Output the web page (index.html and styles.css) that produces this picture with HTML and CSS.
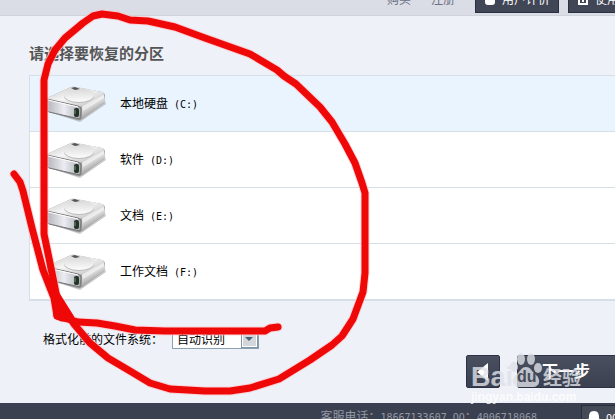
FILE: index.html
```html
<!DOCTYPE html>
<html lang="zh-CN">
<head>
<meta charset="utf-8">
<title>请选择要恢复的分区</title>
<link rel="stylesheet" href="styles.css">
</head>
<body>
<svg class="defs" width="0" height="0" aria-hidden="true">
  <defs>
    <linearGradient id="top" x1="0" y1="0" x2="1" y2="1"><stop offset="0" stop-color="#c4c4c4"/><stop offset=".45" stop-color="#f5f5f5"/><stop offset="1" stop-color="#bdbdbd"/></linearGradient>
    <linearGradient id="dome" x1="0" y1="0" x2="0" y2="1"><stop offset="0" stop-color="#d8d8d8"/><stop offset="1" stop-color="#fcfcfc"/></linearGradient>
    <linearGradient id="front" x1="0" y1="0" x2="1" y2="0"><stop offset="0" stop-color="#b4b5bc"/><stop offset=".5" stop-color="#ececf3"/><stop offset="1" stop-color="#aaabb2"/></linearGradient>
    <linearGradient id="side" x1="0" y1="0" x2=".5" y2="1"><stop offset="0" stop-color="#a8a8a8"/><stop offset=".45" stop-color="#ededed"/><stop offset="1" stop-color="#777"/></linearGradient>
    <symbol id="drive" viewBox="0 0 64 38">
      <path d="M5 27 36 37 62 19 60 14 36 31Z" fill="#a4a7ab" opacity=".6"/>
      <path d="M3 13 25 3Q28 1 32 2L58 7Q61 8 61 11L60 18 38 34Q36 36 33 35L5 27Q3 26 3 24Z" fill="#999"/>
      <path d="M3 13 25 3Q28 1 32 2L58 7Q61 8 59 10L38 21Q36 22 33 21L5 15Z" fill="url(#top)"/>
      <path d="M38 21 60 9 61 17 38 34Z" fill="url(#side)"/>
      <path d="M39 25 60 12" stroke="#fff" stroke-width="1" opacity=".7"/>
      <ellipse cx="35" cy="11" rx="15" ry="7" fill="#bbb"/>
      <ellipse cx="35" cy="10" rx="15" ry="7" fill="url(#dome)"/>
      <path d="M27 3 31 2 36 4 31 5Z" fill="#555"/>
      <path d="M3 14 34 21Q37 22 37 25L36 34 5 27Q3 26 3 24Z" fill="url(#front)" stroke="#777" stroke-width="1"/>
      <path d="M4 15 34 22" stroke="#fff" stroke-width="1"/>
      <rect x="30" y="23" width="5" height="9" rx="2" fill="#253326"/>
      <path d="M31 25v4" stroke="#67a565" stroke-width="1"/>
    </symbol>
  </defs>
</svg>

<header class="topbar">
  <a class="toplink" href="#">购买</a>
  <a class="toplink" href="#">注册</a>
  <button class="tab"><svg width="12" height="16" viewBox="0 0 12 16" aria-hidden="true"><rect x="1" y="2" width="10" height="12" rx="3" fill="#fff"/></svg>用户评价</button>
  <button class="tab"><svg width="12" height="16" viewBox="0 0 12 16" aria-hidden="true"><path d="M2 2h8v11H2z" fill="none" stroke="#fff" stroke-width="2"/><path d="M6 4v4M6 9v2" stroke="#fff" stroke-width="2"/></svg>使用教程</button>
</header>

<main>
  <h1>请选择要恢复的分区</h1>
  <ul class="drives">
    <li class="selected"><svg class="icon" aria-hidden="true"><use href="#drive"/></svg><span>本地硬盘<span class="latin"> (C:)</span></span></li>
    <li><svg class="icon" aria-hidden="true"><use href="#drive"/></svg><span>软件<span class="latin"> (D:)</span></span></li>
    <li><svg class="icon" aria-hidden="true"><use href="#drive"/></svg><span>文档<span class="latin"> (E:)</span></span></li>
    <li><svg class="icon" aria-hidden="true"><use href="#drive"/></svg><span>工作文档<span class="latin"> (F:)</span></span></li>
  </ul>
  <div class="filesystem">
    <label for="fs">格式化前的文件系统：</label>
    <div class="picker">
      <select id="fs"><option>自动识别</option></select>
      <svg class="arrow" width="17" height="18" viewBox="0 0 17 18" aria-hidden="true"><path d="M0 0h17v18H0z" fill="#8394a5"/><path d="M1 1h15v16H1z" fill="#fff"/><path d="M2 2h13v14H2z" fill="#d3d6da"/><path d="M4 7h8L8 11Z" fill="#466078"/></svg>
    </div>
  </div>
  <div class="actions">
    <button class="nav back" aria-label="上一步"><svg width="12" height="20" viewBox="0 0 12 20" aria-hidden="true"><path d="M11 1v18L0 10Z" fill="#fff"/></svg></button>
    <button class="nav next">下一步</button>
  </div>
</main>

<footer>
  <span>客服电话：<span class="latin">18667133607 QQ</span>：<span class="latin">4006718068</span></span>
  <button class="contact"><svg width="12" height="16" viewBox="0 0 12 16" aria-hidden="true"><path d="M6 0C2 0 1 3 1 6L0 12h12L11 6C11 3 10 0 6 0Z" fill="#fff"/></svg><span class="latin">QQ</span>客服</button>
</footer>

<div class="watermark">
  <div class="brand">
    <span class="bai">Bai</span>
    <span class="paw"><svg width="34" height="36" viewBox="0 0 34 36" aria-hidden="true"><ellipse cx="5" cy="14" rx="4" ry="5"/><ellipse cx="12" cy="6" rx="4" ry="6"/><ellipse cx="22" cy="6" rx="4" ry="6"/><ellipse cx="29" cy="15" rx="4" ry="5"/><path d="M17 14c-5 0-6 5-10 8-6 5-3 13 4 12h12c7 1 10-7 4-12-4-3-5-8-10-8Z"/></svg><span class="du">du</span></span>
    <span class="jy">经验</span>
  </div>
  <div class="site">jingyan.baidu.com</div>
</div>

<svg class="marker" width="400" height="419" viewBox="0 0 400 419" aria-hidden="true">
  <defs>
    <path id="ring" d="M60 312 L57 298 51 268 44 234V80L48 64 55 50 65 38 83 23 93 16 102 14 118 16 130 20 148 21 175 27 205 38 250 54 277 70 284 76 296 84 320 107 332 122 345 144 355 163 362 183 365 193V273L363 292 353 319 342 336 332 345 310 360 279 379 250 388 230 391H205L170 389 150 383 130 371 108 358 90 343 74 324 57 298"/>
    <path id="tick" d="M14 174 20 182 23 191 32 228 43 270 54 298 57 316 64 318 78 322 97 323 115 326 135 330 165 331H265L270 328 278 327"/>
  </defs>
  <g class="halo"><use href="#ring"/><use href="#tick"/></g>
  <g class="ink"><use href="#ring"/><use href="#tick"/><path class="blot" d="M56 294 57 316 62 318 71 318Z"/></g>
</svg>
</body>
</html>
```
FILE: styles.css
```css
* { box-sizing: border-box; }

body {
  position: relative;
  display: flex;
  flex-direction: column;
  height: 100vh;
  margin: 0;
  overflow: hidden;
  background: #eef1f8;
  color: #000;
  font: 12px/16px "Noto Sans CJK SC", sans-serif;
}

button, select { font: inherit; }
.defs { position: absolute; }
.latin { font-family: "DejaVu Sans Mono", monospace; font-size: 10px; white-space: pre; }

.topbar {
  display: flex;
  flex: none;
  align-items: flex-end;
  justify-content: flex-end;
  height: 16px;
  margin-right: -37px;
  padding-bottom: 2px;
  overflow: hidden;
  border-bottom: 1px solid #cfd3dc;
  background: #dadde5;
}

.toplink {
  margin-right: 20px;
  padding-bottom: 6px;
  color: #6d7284;
  text-decoration: none;
}

.tab {
  display: flex;
  align-items: center;
  gap: 6px;
  height: 28px;
  margin-right: 9px;
  padding: 0 8px;
  border: 1px solid #2b3040;
  background: #414656;
  color: #fff;
}

.tab:last-child { margin-right: 0; }

main { flex: none; padding: 27px 0 0 29px; }

h1 {
  margin: 0 0 12px;
  color: #555;
  font-size: 15px;
  line-height: 20px;
}

.drives {
  margin: 0;
  padding: 0;
  border: 1px solid #d6dfe8;
  border-width: 1px 0 1px 1px;
  background: #fff;
  list-style: none;
}

.drives li {
  display: flex;
  align-items: center;
  gap: 12px;
  height: 56px;
  padding-left: 14px;
  border-bottom: 1px solid #d6dfe3;
}

.drives .selected { background: #e9f4ff; }
.icon { width: 64px; height: 38px; }

.filesystem {
  display: flex;
  align-items: center;
  gap: 9px;
  margin-top: 28px;
  padding-left: 14px;
}

.picker { position: relative; }

select {
  display: block;
  width: 87px;
  height: 20px;
  padding: 0 20px 0 4px;
  border: 1px solid #8aa0b4;
  border-radius: 0;
  background: #fff;
  color: #000;
  appearance: none;
}

.arrow { position: absolute; top: 1px; right: 1px; pointer-events: none; }

.actions {
  display: flex;
  justify-content: flex-end;
  gap: 17px;
  margin: 6px -20px 15px 0;
}

.nav {
  height: 33px;
  border: 1px solid #2d3242;
  border-radius: 2px;
  background: linear-gradient(#4b5060, #3b4050);
  color: #fff;
}

.back { width: 34px; padding: 0; }
.back svg { display: block; margin: auto; }
.next { width: 118px; padding: 0 20px 4px 0; font-size: 16px; font-weight: 700; }

footer {
  display: flex;
  flex: none;
  justify-content: flex-end;
  gap: 44px;
  height: 36px;
  margin-right: -40px;
  padding-top: 2px;
  background: #3b4050;
  color: #9498a4;
}

footer > span { padding-top: 3px; }

.contact {
  display: flex;
  align-items: center;
  gap: 6px;
  width: 74px;
  height: 28px;
  padding: 0 6px;
  border: 1px solid #292e3c;
  background: #454a59;
  color: #fff;
  white-space: nowrap;
}

.watermark {
  position: absolute;
  right: 34px;
  bottom: 14px;
  width: 110px;
  color: #dfe1e7;
  font-family: "Liberation Sans", "Noto Sans CJK SC", sans-serif;
  opacity: .8;
  pointer-events: none;
}

.brand { display: flex; align-items: flex-end; height: 36px; }
.bai { font-size: 27px; font-weight: 700; line-height: 24px; }
.paw { position: relative; height: 36px; margin-left: -4px; fill: #dfe1e7; }
.du { position: absolute; top: 16px; left: 8px; color: #4b5060; font-size: 16px; font-weight: 700; }
.jy { font-size: 19px; font-weight: 700; line-height: 20px; white-space: nowrap; }
.site { color: #fff; font-size: 12px; font-weight: 700; line-height: 16px; }

.marker {
  position: absolute;
  top: 0;
  left: 0;
  fill: none;
  stroke-linecap: round;
  stroke-linejoin: round;
  pointer-events: none;
}

.halo { stroke: #ffc4c8; stroke-width: 9px; opacity: .7; }
.ink { stroke: #ee0808; stroke-width: 7px; }
.blot { fill: #ee0808; }
```
